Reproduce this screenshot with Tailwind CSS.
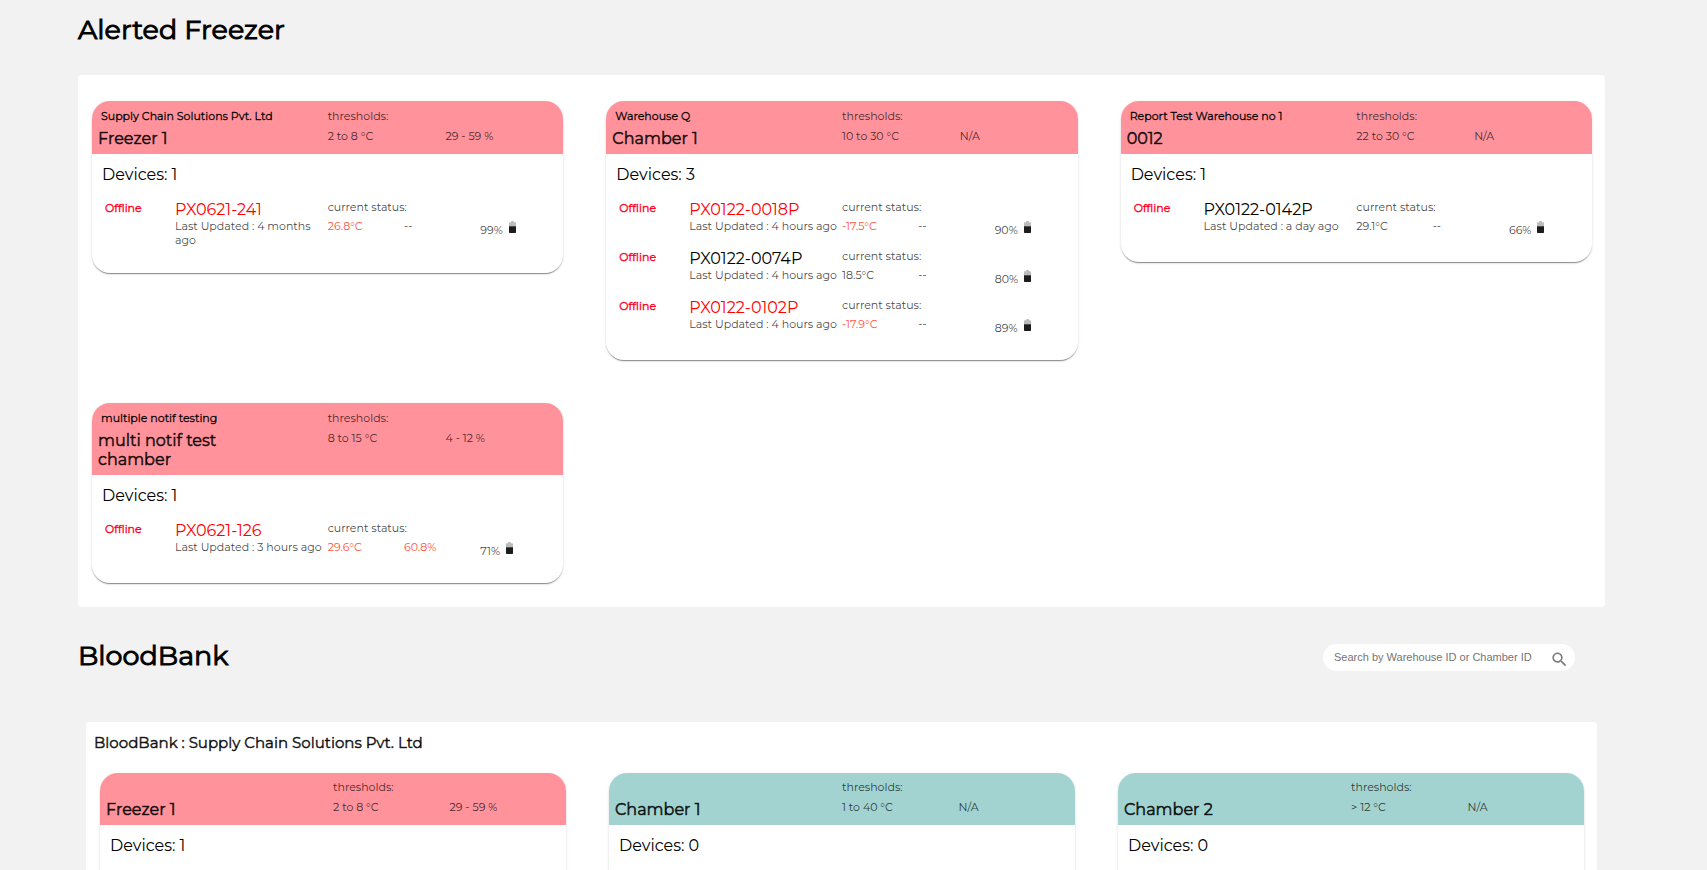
<!DOCTYPE html>
<html lang="en">
<head>
<meta charset="utf-8">
<title>Alerted Freezer</title>
<script src="https://cdn.jsdelivr.net/npm/@tailwindcss/browser@4"></script>
</head>
<body class="h-screen overflow-hidden bg-[#f2f2f2] pr-[102px] pl-[78px] font-[Montserrat,Inter,sans-serif] text-[11px] text-black">
<svg class="hidden" aria-hidden="true">
  <symbol id="battery" viewBox="0 0 7 12">
    <path d="M2.2 0h2.6v1.2H6.2Q7 1.2 7 2V5.5H0V2Q0 1.200.8 1.200H2.200Z" fill="#bcbcbc"/>
    <path d="M0 5.200H7V11.300Q7 12 6.300 12H.7Q0 12 0 11.300Z" fill="#1c1c1c"/>
  </symbol>
</svg>

<h1 class="pt-3 text-[27px] leading-9 [-webkit-text-stroke:0.035em]">Alerted Freezer</h1>

<main>
<section class="mt-[27px] grid grid-cols-3 items-start gap-[43px] rounded bg-white pt-[26px] pr-[13px] pb-6 pl-[14px]">

  <article class="overflow-hidden rounded-[18px] bg-white shadow-[0_2px_1px_-1px_rgba(0,0,0,0.3),0_1px_1px_rgba(0,0,0,0.14),0_1px_3px_rgba(0,0,0,0.12)]">
    <header class="grid grid-cols-[50%_25%_25%] gap-y-1 bg-[#ff929b] pt-[7px] pb-[6px] leading-4 text-black/75">
      <p class="pl-[9px] text-black/90 [-webkit-text-stroke:0.035em]">Supply Chain Solutions Pvt. Ltd</p>
      <p class="col-span-2">thresholds:</p>
      <h2 class="pt-px pr-10 pl-[6px] text-base leading-[19px] text-black/85 [-webkit-text-stroke:0.035em]">Freezer 1</h2>
      <p>2 to 8 °C</p><p>29 - 59 %</p>
    </header>
    <div class="pt-[9px] pb-[14px]">
      <h3 class="mb-3 pl-[10px] text-base leading-6">Devices: 1</h3>
      <div class="grid grid-cols-[17.6%_32.4%_16.2%_16.2%_1fr] pb-[9px] leading-4 text-black/75">
        <p class="pl-[13px] leading-[18px] text-[#ff001f] [-webkit-text-stroke:0.035em]">Offline</p>
        <div class="pt-[2px] pb-[3px]"><a href="#" class="block text-base leading-[18px] text-[#ff0000]">PX0621-241</a><p class="leading-[14px]">Last Updated : 4 months ago</p></div>
        <div class="col-span-2"><p class="mb-[3px]">current status:</p><div class="grid grid-cols-2"><p class="text-[#ff5544]">26.8°C</p><p>--</p></div></div>
        <div class="flex items-start gap-[6px] pt-[22px] leading-[18px]">99%<svg class="h-3 w-[7px]"><use href="#battery"/></svg></div>
      </div>
    </div>
  </article>

  <article class="overflow-hidden rounded-[18px] bg-white shadow-[0_2px_1px_-1px_rgba(0,0,0,0.3),0_1px_1px_rgba(0,0,0,0.14),0_1px_3px_rgba(0,0,0,0.12)]">
    <header class="grid grid-cols-[50%_25%_25%] gap-y-1 bg-[#ff929b] pt-[7px] pb-[6px] leading-4 text-black/75">
      <p class="pl-[9px] text-black/90 [-webkit-text-stroke:0.035em]">Warehouse Q</p>
      <p class="col-span-2">thresholds:</p>
      <h2 class="pt-px pr-10 pl-[6px] text-base leading-[19px] text-black/85 [-webkit-text-stroke:0.035em]">Chamber 1</h2>
      <p>10 to 30 °C</p><p>N/A</p>
    </header>
    <div class="pt-[9px] pb-[14px]">
      <h3 class="mb-3 pl-[10px] text-base leading-6">Devices: 3</h3>
      <div class="grid grid-cols-[17.6%_32.4%_16.2%_16.2%_1fr] pb-[9px] leading-4 text-black/75">
        <p class="pl-[13px] leading-[18px] text-[#ff001f] [-webkit-text-stroke:0.035em]">Offline</p>
        <div class="pt-[2px] pb-[3px]"><a href="#" class="block text-base leading-[18px] text-[#ff0000]">PX0122-0018P</a><p class="leading-[14px]">Last Updated : 4 hours ago</p></div>
        <div class="col-span-2"><p class="mb-[3px]">current status:</p><div class="grid grid-cols-2"><p class="text-[#ff5544]">-17.5°C</p><p>--</p></div></div>
        <div class="flex items-start gap-[6px] pt-[22px] leading-[18px]">90%<svg class="h-3 w-[7px]"><use href="#battery"/></svg></div>
      </div>
      <div class="grid grid-cols-[17.6%_32.4%_16.2%_16.2%_1fr] pb-[9px] leading-4 text-black/75">
        <p class="pl-[13px] leading-[18px] text-[#ff001f] [-webkit-text-stroke:0.035em]">Offline</p>
        <div class="pt-[2px] pb-[3px]"><a href="#" class="block text-base leading-[18px] text-black">PX0122-0074P</a><p class="leading-[14px]">Last Updated : 4 hours ago</p></div>
        <div class="col-span-2"><p class="mb-[3px]">current status:</p><div class="grid grid-cols-2"><p>18.5°C</p><p>--</p></div></div>
        <div class="flex items-start gap-[6px] pt-[22px] leading-[18px]">80%<svg class="h-3 w-[7px]"><use href="#battery"/></svg></div>
      </div>
      <div class="grid grid-cols-[17.6%_32.4%_16.2%_16.2%_1fr] pb-[9px] leading-4 text-black/75">
        <p class="pl-[13px] leading-[18px] text-[#ff001f] [-webkit-text-stroke:0.035em]">Offline</p>
        <div class="pt-[2px] pb-[3px]"><a href="#" class="block text-base leading-[18px] text-[#ff0000]">PX0122-0102P</a><p class="leading-[14px]">Last Updated : 4 hours ago</p></div>
        <div class="col-span-2"><p class="mb-[3px]">current status:</p><div class="grid grid-cols-2"><p class="text-[#ff5544]">-17.9°C</p><p>--</p></div></div>
        <div class="flex items-start gap-[6px] pt-[22px] leading-[18px]">89%<svg class="h-3 w-[7px]"><use href="#battery"/></svg></div>
      </div>
    </div>
  </article>

  <article class="overflow-hidden rounded-[18px] bg-white shadow-[0_2px_1px_-1px_rgba(0,0,0,0.3),0_1px_1px_rgba(0,0,0,0.14),0_1px_3px_rgba(0,0,0,0.12)]">
    <header class="grid grid-cols-[50%_25%_25%] gap-y-1 bg-[#ff929b] pt-[7px] pb-[6px] leading-4 text-black/75">
      <p class="pl-[9px] text-black/90 [-webkit-text-stroke:0.035em]">Report Test Warehouse no 1</p>
      <p class="col-span-2">thresholds:</p>
      <h2 class="pt-px pr-10 pl-[6px] text-base leading-[19px] text-black/85 [-webkit-text-stroke:0.035em]">0012</h2>
      <p>22 to 30 °C</p><p>N/A</p>
    </header>
    <div class="pt-[9px] pb-[14px]">
      <h3 class="mb-3 pl-[10px] text-base leading-6">Devices: 1</h3>
      <div class="grid grid-cols-[17.6%_32.4%_16.2%_16.2%_1fr] pb-[9px] leading-4 text-black/75">
        <p class="pl-[13px] leading-[18px] text-[#ff001f] [-webkit-text-stroke:0.035em]">Offline</p>
        <div class="pt-[2px] pb-[3px]"><a href="#" class="block text-base leading-[18px] text-black">PX0122-0142P</a><p class="leading-[14px]">Last Updated : a day ago</p></div>
        <div class="col-span-2"><p class="mb-[3px]">current status:</p><div class="grid grid-cols-2"><p>29.1°C</p><p>--</p></div></div>
        <div class="flex items-start gap-[6px] pt-[22px] leading-[18px]">66%<svg class="h-3 w-[7px]"><use href="#battery"/></svg></div>
      </div>
    </div>
  </article>

  <article class="overflow-hidden rounded-[18px] bg-white shadow-[0_2px_1px_-1px_rgba(0,0,0,0.3),0_1px_1px_rgba(0,0,0,0.14),0_1px_3px_rgba(0,0,0,0.12)]">
    <header class="grid grid-cols-[50%_25%_25%] gap-y-1 bg-[#ff929b] pt-[7px] pb-[6px] leading-4 text-black/75">
      <p class="pl-[9px] text-black/90 [-webkit-text-stroke:0.035em]">multiple notif testing</p>
      <p class="col-span-2">thresholds:</p>
      <h2 class="pt-px pr-14 pl-[6px] text-base leading-[19px] text-black/85 [-webkit-text-stroke:0.035em]">multi notif test chamber</h2>
      <p>8 to 15 °C</p><p>4 - 12 %</p>
    </header>
    <div class="pt-[9px] pb-[14px]">
      <h3 class="mb-3 pl-[10px] text-base leading-6">Devices: 1</h3>
      <div class="grid grid-cols-[17.6%_32.4%_16.2%_16.2%_1fr] pb-[9px] leading-4 text-black/75">
        <p class="pl-[13px] leading-[18px] text-[#ff001f] [-webkit-text-stroke:0.035em]">Offline</p>
        <div class="pt-[2px] pb-[3px]"><a href="#" class="block text-base leading-[18px] text-[#ff0000]">PX0621-126</a><p class="leading-[14px]">Last Updated : 3 hours ago</p></div>
        <div class="col-span-2"><p class="mb-[3px]">current status:</p><div class="grid grid-cols-2"><p class="text-[#ff5544]">29.6°C</p><p class="text-[#ff5544]">60.8%</p></div></div>
        <div class="flex items-start gap-[6px] pt-[22px] leading-[18px]">71%<svg class="h-3 w-[7px]"><use href="#battery"/></svg></div>
      </div>
    </div>
  </article>
</section>

<div class="mt-[31px] flex items-center justify-between pr-[30px]">
  <h1 class="text-[27px] leading-9 [-webkit-text-stroke:0.035em]">BloodBank</h1>
  <form class="mt-[3px] flex h-[27px] w-[252px] items-center rounded-full bg-white pr-[6px] pl-[11px]">
    <input type="search" aria-label="Search" placeholder="Search by Warehouse ID or Chamber ID" class="min-w-0 flex-1 font-[Liberation_Sans,sans-serif] text-[11px] outline-none placeholder:text-[#757575]">
    <button type="button" aria-label="Search" class="pt-1"><svg class="size-[19px]" viewBox="0 0 24 24" fill="#7c7c7c"><path d="M15.5 14h-.79l-.28-.27C15.410 12.590 16 11.110 16 9.500 16 5.910 13.090 3 9.500 3S3 5.910 3 9.500 5.910 16 9.500 16c1.610 0 3.090-.59 4.230-1.570l.27.28v.79l5 4.990L20.490 19l-4.990-5zm-6 0C7.010 14 5 11.990 5 9.500S7.010 5 9.500 5 14 7.010 14 9.500 11.990 14 9.500 14z"/></svg></button>
  </form>
</div>

<section class="mx-2 mt-12 rounded bg-white pb-6">
  <h2 class="pt-[9px] pl-2 text-[15px] leading-6 text-black/85 [-webkit-text-stroke:0.035em]">BloodBank : Supply Chain Solutions Pvt. Ltd</h2>
  <div class="mt-[18px] grid grid-cols-3 items-start gap-x-[43px] pr-[13px] pl-[14px]">
    <article class="min-h-32 overflow-hidden rounded-[18px] bg-white shadow-[0_2px_1px_-1px_rgba(0,0,0,0.3),0_1px_1px_rgba(0,0,0,0.14),0_1px_3px_rgba(0,0,0,0.12)]">
      <header class="grid grid-cols-[50%_25%_25%] gap-y-1 bg-[#ff929b] pt-[6px] pb-[6px] leading-4 text-black/75">
        <p class="col-span-2 col-start-2">thresholds:</p>
        <h3 class="pt-px pl-[6px] text-base leading-[19px] text-black/85 [-webkit-text-stroke:0.035em]">Freezer 1</h3>
        <p>2 to 8 °C</p><p>29 - 59 %</p>
      </header>
      <h4 class="pt-[9px] pl-[10px] text-base leading-6">Devices: 1</h4>
    </article>
    <article class="min-h-32 overflow-hidden rounded-[18px] bg-white shadow-[0_2px_1px_-1px_rgba(0,0,0,0.3),0_1px_1px_rgba(0,0,0,0.14),0_1px_3px_rgba(0,0,0,0.12)]">
      <header class="grid grid-cols-[50%_25%_25%] gap-y-1 bg-[#a2d3d0] pt-[6px] pb-[6px] leading-4 text-black/75">
        <p class="col-span-2 col-start-2">thresholds:</p>
        <h3 class="pt-px pl-[6px] text-base leading-[19px] text-black/85 [-webkit-text-stroke:0.035em]">Chamber 1</h3>
        <p>1 to 40 °C</p><p>N/A</p>
      </header>
      <h4 class="pt-[9px] pl-[10px] text-base leading-6">Devices: 0</h4>
    </article>
    <article class="min-h-32 overflow-hidden rounded-[18px] bg-white shadow-[0_2px_1px_-1px_rgba(0,0,0,0.3),0_1px_1px_rgba(0,0,0,0.14),0_1px_3px_rgba(0,0,0,0.12)]">
      <header class="grid grid-cols-[50%_25%_25%] gap-y-1 bg-[#a2d3d0] pt-[6px] pb-[6px] leading-4 text-black/75">
        <p class="col-span-2 col-start-2">thresholds:</p>
        <h3 class="pt-px pl-[6px] text-base leading-[19px] text-black/85 [-webkit-text-stroke:0.035em]">Chamber 2</h3>
        <p>&gt; 12 °C</p><p>N/A</p>
      </header>
      <h4 class="pt-[9px] pl-[10px] text-base leading-6">Devices: 0</h4>
    </article>
  </div>
</section>
</main>
</body>
</html>
